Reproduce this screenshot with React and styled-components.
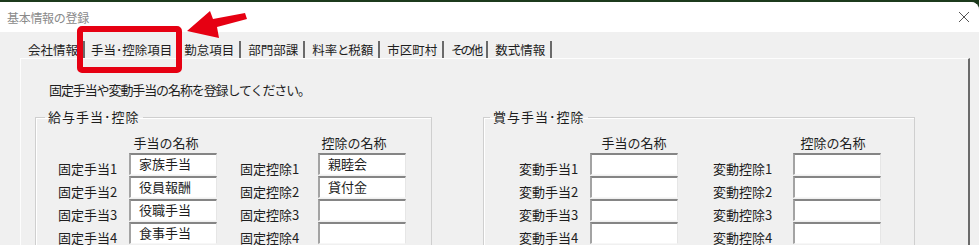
import React from 'react'
import styled, { createGlobalStyle } from 'styled-components'

const GlobalStyle = createGlobalStyle`
  html, body {
    margin: 0;
    padding: 0;
    background: #1c3a1c;
  }
  body {
    font-family: "Noto Sans CJK JP", "Noto Sans", sans-serif;
    color: #1e1e1e;
  }
`

const Screen = styled.div`
  position: relative;
  width: 979px;
  height: 245px;
  overflow: hidden;
  background: #1c3a1c;
`

const Window = styled.div`
  margin-top: 2px;
  height: 243px;
  background: #f0f0f0;
  border-top-right-radius: 8px;
  overflow: hidden;
  display: flex;
  flex-direction: column;
`

const TitleBar = styled.div`
  height: 30px;
  flex-shrink: 0;
  background: #fff;
  display: flex;
  align-items: center;
  justify-content: space-between;
  padding: 0 9px 0 7px;
`

const Title = styled.span`
  font-size: 12px;
  color: #8a8a8a;
  letter-spacing: -0.3px;
`

const CloseButton = styled.div`
  width: 12px;
  height: 12px;
  display: flex;
`

const Body = styled.div`
  flex: 1;
  padding: 0 9px 0 20px;
  display: flex;
  flex-direction: column;
`

const TabStrip = styled.div`
  height: 26px;
  flex-shrink: 0;
  display: flex;
  align-items: flex-end;
  padding-left: 1px;
`

const Tab = styled.div`
  height: 18px;
  line-height: 17px;
  font-size: 12.5px;
  font-feature-settings: "palt";
  letter-spacing: ${p => p.$squeeze || 0}px;
  padding: ${p => (p.$active ? '0 5px 0 6px' : '0 5px 0 7px')};
  border-right: ${p => (p.$active ? 'none' : '2px solid #6a6a6a')};
  margin-bottom: -1px;
  white-space: nowrap;
  color: #1e1e1e;
`

const TabPanel = styled.div`
  flex: 1;
  border-top: 1px solid #fdfdfd;
  border-left: 1px solid #fdfdfd;
  border-right: 2px solid #6a6a6a;
  padding: 0 0 0 14px;
`

const Instruction = styled.div`
  margin-top: 23px;
  padding-left: 14px;
  font-size: 13px;
  line-height: 16px;
  letter-spacing: -1.1px;
`

const GroupRow = styled.div`
  display: flex;
  gap: 51px;
  margin-top: 11px;
`

const GroupBox = styled.fieldset`
  width: ${p => p.$width}px;
  box-sizing: border-box;
  margin: 0;
  padding: 10px 0 0 0;
  border: 1px solid #cfcfcf;
  box-shadow: inset 1px 1px 0 #fff;
  min-width: 0;
`

const Legend = styled.legend`
  margin-left: ${p => p.$offset}px;
  padding: 0 3px;
  font-size: 13px;
  line-height: 16px;
  letter-spacing: 1px;
`

const Columns = styled.div`
  display: flex;
  gap: ${p => p.$gap}px;
  padding-left: ${p => p.$inset}px;
`

const FieldColumn = styled.div`
  display: grid;
  grid-template-columns: ${p => p.$label}px 88px;
  grid-template-rows: 18px;
  grid-auto-rows: 23px;
`

const Header = styled.div`
  grid-column: 2;
  font-size: 13px;
  line-height: 16px;
  text-align: center;
  white-space: nowrap;
  transform: translateX(${p => p.$shift || 0}px);
`

const Label = styled.div`
  align-self: end;
  margin-bottom: -1px;
  font-size: 13px;
  line-height: 16px;
  white-space: nowrap;
`

const InputBox = styled.div`
  height: 22px;
  box-sizing: border-box;
  background: #fff;
  border-top: 2px solid #858585;
  border-left: 2px solid #a3a3a3;
  border-right: 1px solid #e6e6e6;
  border-bottom: 1px solid #f7f7f7;
  padding-left: 8px;
  font-size: 13px;
  line-height: 18px;
  white-space: nowrap;
`

const Highlight = styled.div`
  position: absolute;
  left: 77px;
  top: 26px;
  width: 105px;
  height: 47px;
  box-sizing: border-box;
  border: 6px solid #e60012;
  border-radius: 5px;
  pointer-events: none;
`

const Arrow = styled.svg`
  position: absolute;
  left: 0;
  top: 0;
  pointer-events: none;
`

const tabs = [
  { name: '会社情報' },
  { name: '手当･控除項目', active: true },
  { name: '勤怠項目' },
  { name: '部門部課' },
  { name: '料率と税額' },
  { name: '市区町村' },
  { name: 'その他', squeeze: -2 },
  { name: '数式情報' }
]

const salary = {
  allowances: ['家族手当', '役員報酬', '役職手当', '食事手当'],
  deductions: ['親睦会', '貸付金', '', '']
}

function Fields({ prefix, labelWidth, header, values, shift }) {
  return (
    <FieldColumn $label={labelWidth}>
      <Header $shift={shift}>{header}</Header>
      {values.map((v, i) => (
        <React.Fragment key={i}>
          <Label>{prefix}{i + 1}</Label>
          <InputBox>{v}</InputBox>
        </React.Fragment>
      ))}
    </FieldColumn>
  )
}

export default function App() {
  return (
    <Screen>
      <GlobalStyle />
      <Window>
        <TitleBar>
          <Title>基本情報の登録</Title>
          <CloseButton>
            <svg width="12" height="12" viewBox="0 0 12 12">
              <path d="M1 1 L11 11 M11 1 L1 11" stroke="#555" strokeWidth="1" fill="none" />
            </svg>
          </CloseButton>
        </TitleBar>
        <Body>
          <TabStrip>
            {tabs.map(t => (
              <Tab key={t.name} $active={t.active} $squeeze={t.squeeze}>{t.name}</Tab>
            ))}
          </TabStrip>
          <TabPanel>
            <Instruction>固定手当や変動手当の名称を登録してください。</Instruction>
            <GroupRow>
              <GroupBox $width={397}>
                <Legend $offset={9}>給与手当･控除</Legend>
                <Columns $gap={23} $inset={22}>
                  <Fields prefix="固定手当" labelWidth={71} header="手当の名称" values={salary.allowances} shift={-7} />
                  <Fields prefix="固定控除" labelWidth={78} header="控除の名称" values={salary.deductions} shift={-8} />
                </Columns>
              </GroupBox>
              <GroupBox $width={432}>
                <Legend $offset={6}>賞与手当･控除</Legend>
                <Columns $gap={35} $inset={35}>
                  <Fields prefix="変動手当" labelWidth={71} header="手当の名称" values={['', '', '', '']} />
                  <Fields prefix="変動控除" labelWidth={80} header="控除の名称" values={['', '', '', '']} shift={-4} />
                </Columns>
              </GroupBox>
            </GroupRow>
          </TabPanel>
        </Body>
      </Window>
      <Highlight />
      <Arrow width="979" height="245" viewBox="0 0 979 245">
        <polygon points="187,31 210,11 213,19 245,13 247,19 217,27 219,38" fill="#e60012" />
      </Arrow>
    </Screen>
  )
}
